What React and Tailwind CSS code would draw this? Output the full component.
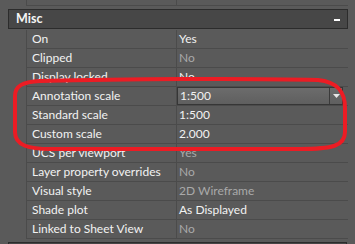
import React from 'react';

const rows = [
  { label: 'On', value: 'Yes' },
  { label: 'Clipped', value: 'No', dim: true },
  { label: 'Display locked', value: 'No' },
  { label: 'Annotation scale', value: '1:500', combo: true },
  { label: 'Standard scale', value: '1:500' },
  { label: 'Custom scale', value: '2.000' },
  { label: 'UCS per viewport', value: 'Yes', dim: true },
  { label: 'Layer property overrides', value: 'No', dim: true },
  { label: 'Visual style', value: '2D Wireframe', dim: true },
  { label: 'Shade plot', value: 'As Displayed' },
  { label: 'Linked to Sheet View', value: 'No', dim: true },
];

const Row = ({ label, value, dim, combo }) => (
  <div className="flex h-[19px]">
    <div className="w-[26px] shrink-0" />
    <div className="flex w-[322px] border-b border-l border-[#4b4b4b]">
      <div className="w-[150px] shrink-0 border-r border-[#4b4b4b] pl-[5px] leading-[17px] text-[#f2f2f2]">{label}</div>
      {combo ? (
        <div className="flex flex-1 items-stretch">
          <div className="flex flex-1 border border-[#363636] bg-gradient-to-b from-[#6c6c6c] to-[#5f5f5f]">
            <div className="flex-1 pl-[2px] leading-[15px] text-[#f2f2f2]">{value}</div>
            <div className="flex w-[13px] items-center justify-center border-l border-[#3a3a3a]">
              <svg width="7" height="4" viewBox="0 0 7 4"><path d="M0 0h7L3.5 4z" fill="#e8e8e8" /></svg>
            </div>
          </div>
          <div className="w-[5px]" />
        </div>
      ) : (
        <div className={`flex-1 pl-[2px] leading-[17px] ${dim ? 'text-[#a9a9a9]' : 'text-[#f2f2f2]'}`}>{value}</div>
      )}
    </div>
  </div>
);

export default function App() {
  return (
    <div className="relative h-[244px] w-[355px] overflow-hidden bg-[#5a5a5a] text-[12px] font-['Lato','Noto_Sans',sans-serif]">
      <div className="flex h-[6px]">
        <div className="w-[26px] shrink-0" />
        <div className="relative flex w-[322px] border-b border-l border-[#4b4b4b]">
          <div className="w-[150px] shrink-0 border-r border-[#4b4b4b] pl-[5px] leading-[18px] text-[#f2f2f2] -mt-[13px]">Width</div>
        </div>
      </div>
      <div className="mx-[8px] mt-[3px] flex h-[20px] w-[340px] items-center justify-between border border-[#2c2c2c] bg-[#474747] pl-[7px] pr-[7px]">
        <span className="text-[12.5px] font-bold text-[#f5f5f5]">Misc</span>
        <span className="mt-[1px] h-[2px] w-[6px] bg-white" />
      </div>
      <div className="mt-[1px]">
        {rows.map((r) => (
          <Row key={r.label} {...r} />
        ))}
      </div>
      <div className="mx-[8px] mt-[3px] h-[10px] border-t border-l border-r border-[#2c2c2c] bg-[#474747]" />
      <svg className="absolute left-0 top-0" width="355" height="244" viewBox="0 0 355 244">
        <path
          d="M40 81 C120 79 250 78 318 80 C338 82 345 92 345 108 L345 132 C345 146 332 149 300 149 L50 149 C30 149 15 146 15 132 L15 96 C15 86 22 82 40 81 Z"
          fill="none"
          stroke="#ec1c24"
          strokeWidth="4"
        />
      </svg>
    </div>
  );
}
